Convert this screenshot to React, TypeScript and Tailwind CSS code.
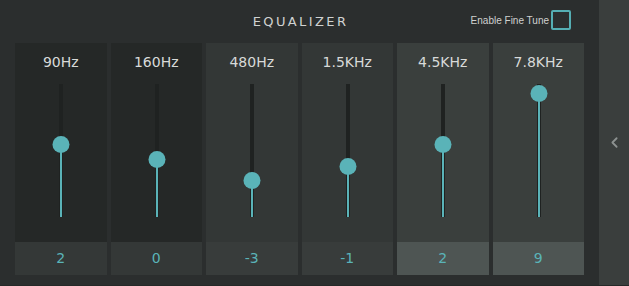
import { ChevronLeft } from "lucide-react";

const bands = [
  { label: "90Hz", value: 2, col: "bg-[#252827]", box: "bg-[#343837]" },
  { label: "160Hz", value: 0, col: "bg-[#252827]", box: "bg-[#343837]" },
  { label: "480Hz", value: -3, col: "bg-[#333736]", box: "bg-[#383c3b]" },
  { label: "1.5KHz", value: -1, col: "bg-[#333736]", box: "bg-[#383c3b]" },
  { label: "4.5KHz", value: 2, col: "bg-[#3a3f3d]", box: "bg-[#4e5553]" },
  { label: "7.8KHz", value: 9, col: "bg-[#3a3f3d]", box: "bg-[#4e5553]" },
];

// track is 133px tall, zero sits 75px from the top, ~7.33px per step
const knobTop = (v: number) => 75 - v * 7.33;

function Band({ label, value, col, box }: (typeof bands)[number]) {
  const y = knobTop(value);
  return (
    <div className={`flex w-[92px] flex-col ${col}`}>
      <div className="flex h-[38px] items-center justify-center text-[14px] text-[#d8dad9]">
        {label}
      </div>
      <div className="relative ml-[38px] mt-[3px] h-[133px] w-[16px]">
        {/* empty part of the track */}
        <div className="absolute left-[6px] top-0 h-full w-[4px] bg-[#1f2221]" />
        {/* filled part */}
        <div
          className="absolute left-[7px] bottom-0 w-[2px] bg-[#5ab3b8]"
          style={{ top: y }}
        />
        <div
          className="absolute left-0 h-[17px] w-[17px] -translate-x-[0.5px] rounded-full bg-[#5ab3b8]"
          style={{ top: y - 8.5 }}
        />
      </div>
      <div className="flex-1" />
      <div
        className={`flex h-[33px] items-center justify-center text-[14px] text-[#5ab3b8] ${box}`}
      >
        {value}
      </div>
    </div>
  );
}

export default function App() {
  return (
    <div
      className="flex h-[286px] w-[629px] overflow-hidden border-b border-[#252928]"
      style={{ fontFamily: '"DejaVu Sans", sans-serif' }}
    >
      <div className="flex w-[599px] flex-col bg-[#2b2e2e]">
        {/* Header */}
        <div className="grid h-[43px] grid-cols-[1fr_auto_1fr] items-center">
          <div />
          <div className="pl-[2px] text-[13px] tracking-[2.4px] text-[#d0d2d1]">
            EQUALIZER
          </div>
          <div className="flex items-center justify-end gap-[2px] pr-[28px] pb-[3px]">
            <span
              className="text-[10px] text-[#cfd1d0]"
              style={{ fontFamily: '"Liberation Sans", sans-serif' }}
            >
              Enable Fine Tune
            </span>
            <div className="h-[20px] w-[20px] rounded-[2px] border-2 border-[#55aeb3]" />
          </div>
        </div>

        {/* Bands */}
        <div className="flex h-[232px] gap-1 px-[15px]">
          {bands.map((b) => (
            <Band key={b.label} {...b} />
          ))}
        </div>
      </div>

      {/* Side handle */}
      <div className="flex flex-1 items-center justify-center bg-[#3a3e3d]">
        <ChevronLeft className="h-[17px] w-[17px] text-[#8c9190]" strokeWidth={2.5} />
      </div>
    </div>
  );
}
